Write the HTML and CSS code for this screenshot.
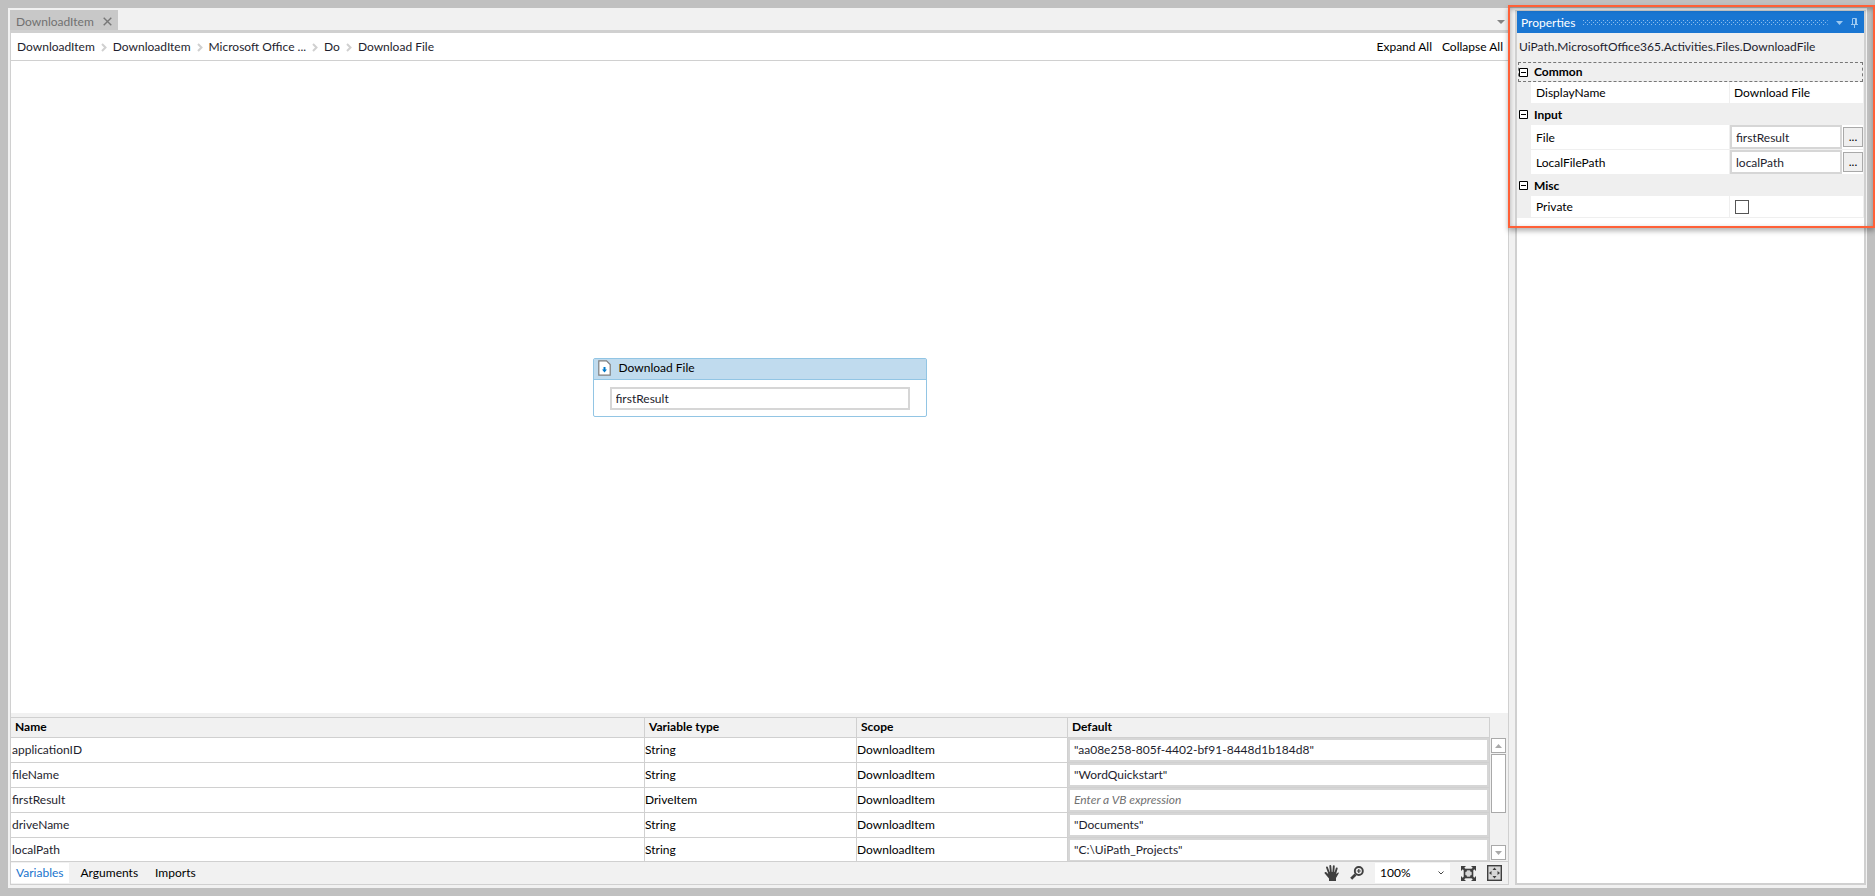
FILE: index.html
```html
<!DOCTYPE html>
<html lang="en">
<head>
  <meta charset="UTF-8" />
  <meta name="viewport" content="width=device-width, initial-scale=1.0"/>
  <title>DownloadItem</title>
  <link rel="stylesheet" href="styles.css">
</head>
<body>
  <div class="window">
    <main class="designer">
      <div class="tab-strip">
        <div class="doc-tab">
          <span>DownloadItem</span>
          <button class="tab-close" aria-label="Close">
            <svg width="9" height="9" viewBox="0 0 9 9"><path d="M.7.7l7.6 7.6M8.3.7L.7 8.3" stroke="#777" stroke-width="1.4"/></svg>
          </button>
        </div>
        <button class="tab-menu" aria-label="Open documents">
          <svg width="8" height="4" viewBox="0 0 8 4"><path d="M0 0h8L4 4z" fill="#848484"/></svg>
        </button>
      </div>

      <div class="crumb-bar">
        <nav class="crumbs">
          <a href="#">DownloadItem</a>
          <svg width="6" height="9" viewBox="0 0 6 9"><path d="M1 1l3.500 3.500L1 8" fill="none" stroke="#d0d0d0" stroke-width="2"/></svg>
          <a href="#">DownloadItem</a>
          <svg width="6" height="9" viewBox="0 0 6 9"><path d="M1 1l3.500 3.500L1 8" fill="none" stroke="#d0d0d0" stroke-width="2"/></svg>
          <a href="#">Microsoft Office ...</a>
          <svg width="6" height="9" viewBox="0 0 6 9"><path d="M1 1l3.500 3.500L1 8" fill="none" stroke="#d0d0d0" stroke-width="2"/></svg>
          <a href="#">Do</a>
          <svg width="6" height="9" viewBox="0 0 6 9"><path d="M1 1l3.500 3.500L1 8" fill="none" stroke="#d0d0d0" stroke-width="2"/></svg>
          <a href="#">Download File</a>
        </nav>
        <div class="crumb-actions">
          <button>Expand All</button>
          <button>Collapse All</button>
        </div>
      </div>

      <div class="canvas">
        <section class="activity">
          <header class="activity-head">
            <svg width="13" height="16" viewBox="0 0 13 16">
              <path d="M1.500.8h7l3.700 3.700v10.700H.8V.8z" fill="#fff" stroke="#7d7d7d" stroke-width="1.200"/>
              <path d="M6.500 7v3" stroke="#0078c8" stroke-width="2"/>
              <path d="M4 9.500h5L6.500 12.500z" fill="#0078c8"/>
            </svg>
            <label for="activityFile">Download File</label>
          </header>
          <div class="activity-body">
            <input class="field" type="text" id="activityFile" value="firstResult" />
          </div>
        </section>
      </div>

      <div class="variables">
        <div class="table-wrap">
          <table>
            <colgroup>
              <col class="col-name"><col class="col-type"><col class="col-scope"><col class="col-default">
            </colgroup>
            <thead>
              <tr><th>Name</th><th>Variable type</th><th>Scope</th><th>Default</th></tr>
            </thead>
            <tbody>
              <tr><td>applicationID</td><td>String</td><td>DownloadItem</td><td><input type="text" aria-label="applicationID default" value="&quot;aa08e258-805f-4402-bf91-8448d1b184d8&quot;" /></td></tr>
              <tr><td>fileName</td><td>String</td><td>DownloadItem</td><td><input type="text" aria-label="fileName default" value="&quot;WordQuickstart&quot;" /></td></tr>
              <tr><td>firstResult</td><td>DriveItem</td><td>DownloadItem</td><td><input type="text" aria-label="firstResult default" placeholder="Enter a VB expression" /></td></tr>
              <tr><td>driveName</td><td>String</td><td>DownloadItem</td><td><input type="text" aria-label="driveName default" value="&quot;Documents&quot;" /></td></tr>
              <tr><td>localPath</td><td>String</td><td>DownloadItem</td><td><input type="text" aria-label="localPath default" value="&quot;C:\UiPath_Projects&quot;" /></td></tr>
            </tbody>
          </table>
        </div>
        <div class="scrollbar">
          <button aria-label="Scroll up"><svg width="7" height="4" viewBox="0 0 7 4"><path d="M0 4h7L3.500 0z" fill="#a9a9a9"/></svg></button>
          <div class="scroll-thumb"></div>
          <button class="scroll-down" aria-label="Scroll down"><svg width="7" height="4" viewBox="0 0 7 4"><path d="M0 0h7L3.500 4z" fill="#a9a9a9"/></svg></button>
        </div>
      </div>

      <footer class="bottom-bar">
        <div class="bottom-tabs">
          <button class="active">Variables</button>
          <button>Arguments</button>
          <button>Imports</button>
        </div>
        <div class="tools">
          <button aria-label="Pan">
            <svg width="15" height="16" viewBox="0 0 15 16">
              <path d="M3 2.500l2 5.500M6.300 1l.6 6.500M9.800 1.200L9.300 7.500M12.700 3.500L11.200 8.500" stroke="#3f3f3f" stroke-width="1.900" stroke-linecap="round"/>
              <path d="M1 7.200c1-.5 2 .6 3.200 2L4.300 7h7.700l.3 2 1.700-1.500c.8-.2 1 .5.600 1L12 13v3H5v-2.500L.8 8.600C.3 8 .5 7.400 1 7.200z" fill="#3f3f3f"/>
            </svg>
          </button>
          <button aria-label="Zoom">
            <svg width="14" height="14" viewBox="0 0 14 14">
              <circle cx="8.800" cy="5" r="4" fill="none" stroke="#3f3f3f" stroke-width="1.900"/>
              <path d="M6.800 5h4M8.800 3v4" stroke="#3f3f3f" stroke-width="1.200"/>
              <path d="M5.500 8.500L1.200 12.800" stroke="#3f3f3f" stroke-width="2.800"/>
            </svg>
          </button>
          <div class="zoom-box">
            <select aria-label="Zoom level"><option>100%</option></select>
            <svg width="6" height="4" viewBox="0 0 6 4"><path d="M.5.5L3 3 5.500.5" fill="none" stroke="#444"/></svg>
          </div>
          <button aria-label="Fit to screen">
            <svg width="15" height="15" viewBox="0 0 15 15">
              <rect x="3.500" y="3.500" width="8" height="8" fill="#d6d6d6" stroke="#3f3f3f" stroke-width="1.600"/>
              <path d="M0 0h5L0 5zM15 0v5L10 0zM0 15v-5l5 5zM15 15h-5l5-5z" fill="#3f3f3f"/>
              <path d="M1 1l4.500 4.500M14 1L9.500 5.500M1 14l4.500-4.500M14 14L9.500 9.500" stroke="#3f3f3f" stroke-width="2"/>
            </svg>
          </button>
          <button aria-label="Overview">
            <svg width="15" height="16" viewBox="0 0 15 16">
              <rect x=".7" y=".7" width="13.600" height="14.600" fill="#d6d6d6" stroke="#3f3f3f" stroke-width="1.400"/>
              <path d="M7.500 2.500l2 2.500h-4zM7.500 13.500l2-2.500h-4zM2 8l2.500-2v4zM13 8l-2.500-2v4z" fill="#3f3f3f"/>
            </svg>
          </button>
        </div>
      </footer>
    </main>

    <aside class="properties">
      <header class="panel-title">
        <h1>Properties</h1>
        <svg class="grip" height="5">
          <defs>
            <pattern id="dots" width="4" height="4" patternUnits="userSpaceOnUse">
              <path d="M0 0h1v1H0zM2 2h1v1H2z" fill="#8cbdec"/>
            </pattern>
          </defs>
          <rect width="100%" height="5" fill="url(#dots)"/>
        </svg>
        <button aria-label="Panel menu"><svg width="7" height="4" viewBox="0 0 7 4"><path d="M0 0h7L3.500 4z" fill="#9cc8f0"/></svg></button>
        <button aria-label="Pin"><svg width="7" height="10" viewBox="0 0 7 10"><path d="M1.500 6V.5h4V6M4.500.5V6M0 6.500h7M3.500 6.500V10" fill="none" stroke="#9cc8f0"/></svg></button>
      </header>
      <div class="prop-sheet">
        <p class="type-name">UiPath.MicrosoftOffice365.Activities.Files.DownloadFile</p>

        <h2 class="group selected"><button aria-label="Collapse Common"><svg width="9" height="9" viewBox="0 0 9 9"><path d="M.5.5h8v8h-8zM2 4.500h5" fill="#fff" stroke="#000"/></svg></button>Common</h2>
        <div class="prop">
          <label for="displayName">DisplayName</label>
          <div class="value"><input class="plain" type="text" id="displayName" value="Download File" /></div>
        </div>

        <h2 class="group"><button aria-label="Collapse Input"><svg width="9" height="9" viewBox="0 0 9 9"><path d="M.5.5h8v8h-8zM2 4.500h5" fill="#fff" stroke="#000"/></svg></button>Input</h2>
        <div class="prop tall">
          <label for="file">File</label>
          <div class="value"><input class="field" type="text" id="file" value="firstResult" /><button class="more" aria-label="Edit File">...</button></div>
        </div>
        <div class="prop tall">
          <label for="localFilePath">LocalFilePath</label>
          <div class="value"><input class="field" type="text" id="localFilePath" value="localPath" /><button class="more" aria-label="Edit LocalFilePath">...</button></div>
        </div>

        <h2 class="group"><button aria-label="Collapse Misc"><svg width="9" height="9" viewBox="0 0 9 9"><path d="M.5.5h8v8h-8zM2 4.500h5" fill="#fff" stroke="#000"/></svg></button>Misc</h2>
        <div class="prop">
          <label for="private">Private</label>
          <div class="value"><input type="checkbox" id="private" /></div>
        </div>
      </div>
      <div class="highlight"></div>
    </aside>
  </div>
</body>
</html>
```

FILE: styles.css
```css
* {
  box-sizing: border-box;
}

body {
  margin: 0;
  height: 100vh;
  padding: 8px;
  background: #c0c0c0;
  font-family: Lato, "Open Sans", sans-serif;
  font-size: 12px;
  line-height: 16px;
  color: #000;
  overflow: hidden;
}

button, input, select {
  font: inherit;
  color: inherit;
}

button {
  padding: 0;
  border: none;
  background: none;
}

a {
  color: #1e1e2e;
  text-decoration: none;
}

svg {
  display: block;
  flex: none;
}

h1, h2, p {
  margin: 0;
  font-size: 12px;
}

.window {
  height: 100%;
  padding: 2px 1px 3px 2px;
  display: flex;
  gap: 6px;
  background: #f1f1f1;
}

/* Designer */
.designer {
  flex: 1;
  min-width: 0;
  display: flex;
  flex-direction: column;
}

.tab-strip {
  height: 23px;
  display: flex;
  justify-content: space-between;
  align-items: stretch;
  border-bottom: 3px solid #d0d0d0;
}

.doc-tab {
  display: flex;
  align-items: center;
  gap: 9px;
  padding: 3px 6px 0;
  background: #c8c8c8;
  color: #717171;
}

.tab-menu {
  padding: 4px 4px 0 0;
}

.crumb-bar {
  height: 28px;
  padding: 1px 5px 0 6px;
  display: flex;
  justify-content: space-between;
  align-items: center;
  background: #fff;
  border: 1px solid #d0d0d0;
  border-width: 0 1px 1px;
}

.crumbs, .crumb-actions {
  display: flex;
  align-items: center;
}

.crumbs {
  gap: 6px;
}

.crumb-actions {
  gap: 10px;
}

.canvas {
  flex: 1;
  display: flex;
  justify-content: center;
  align-items: center;
  background: #fff;
  border: 1px solid #d0d0d0;
  border-width: 0 1px;
}

.activity {
  width: 334px;
  background: #fff;
  border: 1px solid #92c5e4;
  border-radius: 2px;
}

.activity-head {
  height: 21px;
  padding: 0 4px 1px;
  display: flex;
  align-items: center;
  gap: 8px;
  background: #c0dbee;
  border-bottom: 1px solid #92c5e4;
}

.activity-body {
  padding: 7px 16px 6px;
}

.field {
  display: block;
  width: 100%;
  height: 23px;
  padding: 0 4px;
  background: #fff;
  border: 2px solid #d6d6d6;
  color: #1e1e2e;
}

/* Variables grid */
.variables {
  height: 149px;
  display: flex;
  background: #f1f1f1;
  border: 1px solid #d0d0d0;
  border-width: 0 1px 1px;
}

.table-wrap {
  flex: 1;
  margin-top: 4px;
  overflow: hidden;
  border-top: 1px solid #d0d0d0;
}

table {
  width: 100%;
  table-layout: fixed;
  border-collapse: separate;
  border-spacing: 0;
}

.col-name { width: 634px; }
.col-type { width: 212px; }
.col-scope { width: 211px; }

th, td {
  padding: 0;
  text-align: left;
  border: 1px solid #d0d0d0;
  border-width: 0 1px 1px 0;
}

th {
  height: 20px;
  padding: 0 0 1px 4px;
  font-weight: 700;
}

td {
  height: 25px;
  background: #fff;
}

td:first-child {
  padding-left: 1px;
  color: #1e1e2e;
}

td input {
  display: block;
  width: 100%;
  height: 24px;
  padding: 0 4px 2px;
  border: 2px solid #d6d6d6;
  color: #1e1e2e;
}

td input::placeholder {
  color: #717171;
  font-style: italic;
}

.scrollbar {
  width: 18px;
  padding: 25px 2px 1px 1px;
  display: flex;
  flex-direction: column;
  gap: 1px;
}

.scrollbar button, .scroll-thumb {
  width: 15px;
  height: 15px;
  display: flex;
  justify-content: center;
  align-items: center;
  background: #fff;
  border: 1px solid #a9a9a9;
}

.scrollbar .scroll-thumb {
  height: 59px;
}

.scrollbar .scroll-down {
  margin-top: auto;
}

.bottom-bar {
  height: 23px;
  display: flex;
  justify-content: space-between;
  align-items: stretch;
  border: 1px solid #d0d0d0;
  border-width: 0 1px 1px;
}

.bottom-tabs {
  display: flex;
  gap: 7px;
  padding: 1px 0;
}

.bottom-tabs button {
  padding: 0 5px;
}

.bottom-tabs .active {
  background: #fff;
  color: #1874cd;
}

.tools {
  display: flex;
  align-items: center;
  gap: 11px;
  padding-right: 6px;
}

.zoom-box {
  width: 75px;
  height: 20px;
  padding: 0 6px 0 5px;
  display: flex;
  align-items: center;
  background: #fff;
}

.zoom-box select {
  flex: 1;
  padding: 0;
  appearance: none;
  border: none;
  background: none;
}

/* Properties panel */
.properties {
  position: relative;
  width: 351px;
  border: 2px solid #d0d0d0;
  border-width: 1px 2px 2px;
  background: #fff;
}

.panel-title {
  height: 22px;
  padding: 1px 6px 0 4px;
  display: flex;
  align-items: center;
  gap: 8px;
  background: #1a76d2;
  color: #fff;
}

.panel-title h1 {
  font-weight: 400;
}

.grip {
  flex: 1;
  min-width: 0;
}

.prop-sheet {
  background: #efefef;
  padding: 0 1px;
}

.type-name {
  height: 29px;
  padding: 6px 1px;
  color: #1e1e2e;
}

.group {
  height: 21px;
  display: flex;
  align-items: center;
  gap: 6px;
  padding-left: 1px;
  font-weight: 700;
}

.group.selected {
  height: 20px;
  outline: 1px dashed #777;
  outline-offset: -1px;
}

.prop {
  height: 22px;
  margin-left: 13px;
  display: flex;
  background: #fff;
  border-bottom: 1px solid #efefef;
}

.prop.tall {
  height: 25px;
}

.prop label {
  width: 199px;
  padding: 1px 0 0 5px;
  display: flex;
  align-items: center;
  border-right: 1px solid #efefef;
}

.value {
  flex: 1;
  min-width: 0;
  display: flex;
  align-items: center;
  gap: 1px;
}

.value .field {
  flex: 1;
  min-width: 0;
  height: 24px;
}

.plain {
  width: 100%;
  padding: 0 4px;
  border: none;
  background: none;
}

.more {
  width: 20px;
  height: 20px;
  background: #efefef;
  border: 1px solid #a9a9a9;
}

.value input[type="checkbox"] {
  appearance: none;
  width: 14px;
  height: 14px;
  margin: 0 5px;
  background: #fff;
  border: 1px solid #555;
}

/* Callout frame around the property sheet */
.highlight {
  position: absolute;
  top: -6px;
  left: -9px;
  right: -11px;
  height: 223px;
  border: 2px solid #ff6037;
  box-shadow: 0 3px 5px rgba(0, 0, 0, 0.3), inset 0 2px 5px rgba(0, 0, 0, 0.3);
  pointer-events: none;
}
```
